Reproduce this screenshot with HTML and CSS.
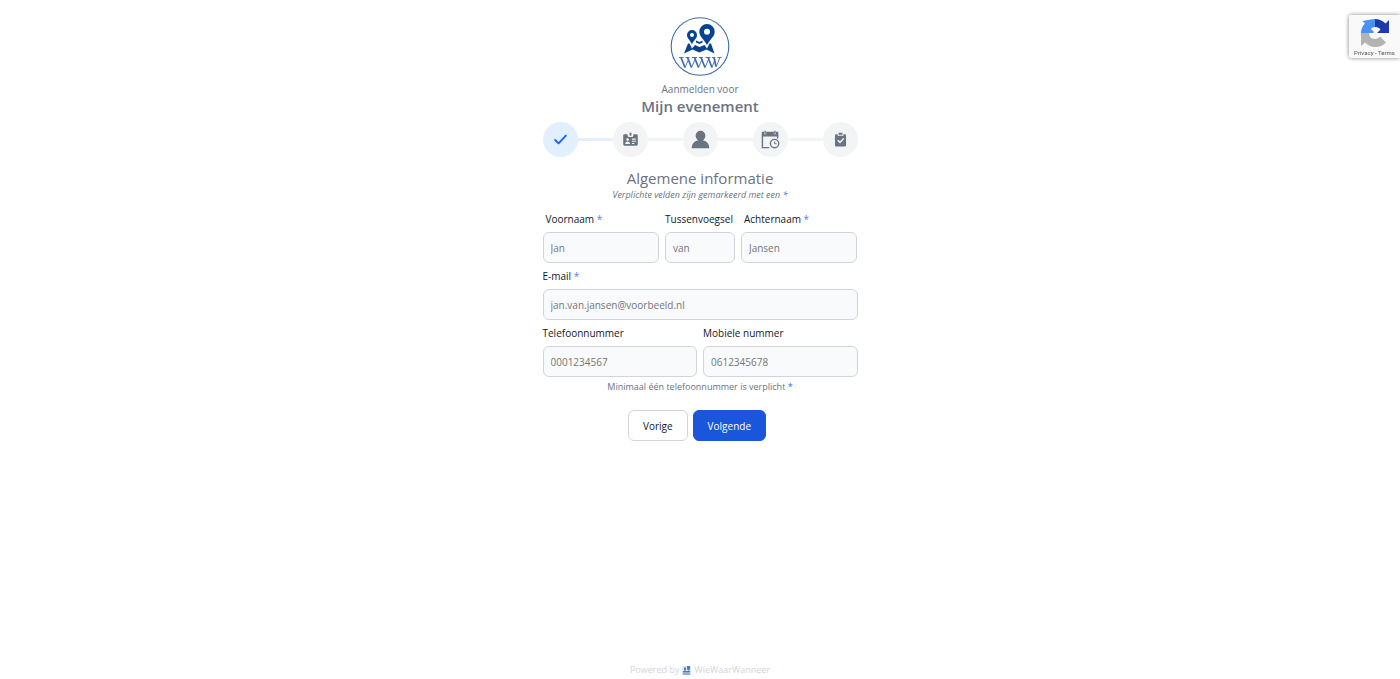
FILE: index.html
```
<!DOCTYPE html>
<html lang="nl">
<head>
    <meta charset="UTF-8">
    <meta name="viewport" content="width=device-width, initial-scale=1.0">
    <title>Aanmelden - WieWaarWanneer</title>
    <link rel="stylesheet" href="styles.css">
</head>
<body>

<main class="container">
    <!-- Logo -->
    <svg class="logo" viewBox="0 0 60 60" role="img" aria-label="WieWaarWanneer">
        <circle cx="30" cy="29.500" r="28.800" fill="#fff" stroke="#3c6cab" stroke-width="1.100"/>
        <g fill="#07448f" fill-rule="evenodd">
            <path d="M37 7a7.700 7.700 0 0 1 7.700 7.700c0 5-5.200 8-7.700 13.300c-2.500-5.300-7.700-8.300-7.700-13.300A7.700 7.700 0 0 1 37 7zm0 4.700a3 3 0 1 0 0 6a3 3 0 0 0 0-6z"/>
            <path d="M22 13a5 5 0 0 1 5 5c0 3.500-3.500 5.500-5 9.500c-1.500-4-5-6-5-9.500a5 5 0 0 1 5-5zm0 3a2 2 0 1 0 0 4a2 2 0 0 0 0-4z"/>
            <path d="M26 23.500l3.500 1.500 3-1.500v2l-3 1.500-3.500-1.500z"/>
            <path d="M18 26.500h1.500l2.500 5 3-3.500 4.500 2 5-2 2.500 3.500 2.500-5H41L44.500 36.500l-8-4-7 3-7-3-8.500 4z"/>
        </g>
        <!-- Three overlapping W shapes -->
        <g fill="none" stroke="#3c6cab">
            <path d="M9 40.500h4.500M15.500 40.500h4M22 40.500h5M29 40.500h4M35.500 40.500h5M42 40.500h3.500M47.500 40.500h4" stroke-width=".9"/>
            <path d="M11 40.500l4 10M17.500 40.500l4 10M24.500 40.500l4 10M31 40.500l4 10M38 40.500l4 10M44 40.500l2 9" stroke-width="1.700"/>
            <path d="M15 50.500l3.500-8M21.500 50.500l4-9M28.500 50.500l3.500-8M35 50.500l4-9M42 50.500l3-8M46 50l4-9.500" stroke-width=".9"/>
        </g>
    </svg>
    <p class="intro">Aanmelden voor</p>
    <h1>Mijn evenement</h1>

    <!-- Steps -->
    <ol class="steps">
        <li class="step done">
            <span class="step-icon">
                <svg viewBox="0 0 36 36"><path d="M12.500 18.500l3.500 3.500 7.500-8" fill="none" stroke="#1c64f2" stroke-width="2" stroke-linecap="round" stroke-linejoin="round"/></svg>
            </span>
        </li>
        <li class="step">
            <span class="step-icon">
                <svg viewBox="0 0 36 36">
                    <path d="M12 12.500h3v1a2 2 0 0 0 2 2h2a2 2 0 0 0 2-2v-1h3a1.500 1.500 0 0 1 1.500 1.500v9a1.500 1.500 0 0 1-1.500 1.500H12a1.500 1.500 0 0 1-1.500-1.500v-9a1.500 1.500 0 0 1 1.500-1.500z"/>
                    <path d="M17 11h2v3h-2z"/>
                    <g fill="#f3f4f6"><circle cx="15" cy="18" r="1.400"/><path d="M12.500 22.700c0-3.500 5-3.500 5 0zM19.500 17H23.500v1.200h-4zM19.500 19.300h4v1h-4zM19.500 21.500h2.500v1h-2.500z"/></g>
                </svg>
            </span>
        </li>
        <li class="step">
            <span class="step-icon">
                <svg viewBox="0 0 36 36"><path d="M18 9a5 5 0 0 1 5 5c0 2-1 4-2.500 5c4 .6 6.500 3.500 6.500 8H9c0-4.500 2.500-7.400 6.500-8C14 18 13 16 13 14a5 5 0 0 1 5-5z"/></svg>
            </span>
        </li>
        <li class="step">
            <span class="step-icon">
                <svg viewBox="0 0 36 36">
                    <path d="M9 10h2.500v2.500h2V10h8v2.500h2V10H26v5H9z"/>
                    <path d="M12.500 9v3M22.500 9v3M9.700 14v12.300h7M25.300 14v3" fill="none" stroke="#6b7280" stroke-width="1.400"/>
                    <circle cx="22.200" cy="22.200" r="4.300" fill="#f3f4f6" stroke="#6b7280" stroke-width="1.400"/>
                    <path d="M22.200 20v2.300h2" fill="none" stroke="#6b7280"/>
                </svg>
            </span>
        </li>
        <li class="step">
            <span class="step-icon">
                <svg viewBox="0 0 36 36">
                    <path d="M13.500 12.500H15v1.700h6v-1.700h1.500a1.200 1.200 0 0 1 1.200 1.200v10.300a1.200 1.200 0 0 1-1.200 1.200h-9a1.200 1.200 0 0 1-1.200-1.200V13.700a1.200 1.200 0 0 1 1.200-1.200zM16 11h4v2.200h-4z"/>
                    <path d="M15.500 19l2 2 3.500-3.700" fill="none" stroke="#f3f4f6" stroke-width="1.400" stroke-linecap="round"/>
                </svg>
            </span>
        </li>
    </ol>

    <h2>Algemene informatie</h2>
    <p class="note italic">Verplichte velden zijn gemarkeerd met een <span class="required">*</span></p>

    <form>
        <div class="row name-row">
            <div class="field indent">
                <label for="voornaam">Voornaam <span class="star">*</span></label>
                <input type="text" id="voornaam" placeholder="Jan">
            </div>
            <div class="field">
                <label for="tussenvoegsel">Tussenvoegsel</label>
                <input type="text" id="tussenvoegsel" placeholder="van">
            </div>
            <div class="field indent">
                <label for="achternaam">Achternaam <span class="star">*</span></label>
                <input type="text" id="achternaam" placeholder="Jansen">
            </div>
        </div>
        <div class="row">
            <div class="field">
                <label for="email">E-mail <span class="star">*</span></label>
                <input type="email" id="email" placeholder="jan.van.jansen@voorbeeld.nl">
            </div>
        </div>
        <div class="row phone-row">
            <div class="field">
                <label for="telefoon">Telefoonnummer</label>
                <input type="tel" id="telefoon" placeholder="0001234567">
            </div>
            <div class="field">
                <label for="mobiel">Mobiele nummer</label>
                <input type="tel" id="mobiel" placeholder="0612345678">
            </div>
        </div>
        <p class="note">Minimaal één telefoonnummer is verplicht <span class="required">*</span></p>

        <div class="buttons">
            <button type="button" class="btn">Vorige</button>
            <button type="submit" class="btn btn-primary">Volgende</button>
        </div>
    </form>
</main>

<footer>
    <span>Powered by</span>
    <svg class="footer-logo" viewBox="0 0 9 9">
        <path d="M0 0h9v9H0z" fill="#dbe6f3"/>
        <path d="M5 0h3v3L6.500 5 5 3zM2 1.500h2V4L3 5 2 4zM1 5h7v1.500H1zM1 7.500h7v1H1z" fill="#4f7db8"/>
    </svg>
    <span>WieWaarWanneer</span>
</footer>

<!-- reCAPTCHA badge -->
<aside class="captcha">
    <svg viewBox="0 0 28 28">
        <path d="M0 14C0 10 1.500 7 4 4.500L1.500 2 10 .5 14 0v8c-2 0-3.500 1-4 2l3 3-1 1z" fill="#4a90f5"/>
        <path d="M14 0c4 0 7.500 1.500 10.500 4.500L28 1v13H16l3.500-3.500C18 8.500 16 8 14 8z" fill="#1c3aa9"/>
        <path d="M0 14h8c0 3 2 6 6 6 2 0 4-1 5-2.500L16 14.500l9 9C19 30 9 29 4 23.500L0 27z" fill="#b3b3b3"/>
    </svg>
    <div class="captcha-links"><a href="#">Privacy</a> - <a href="#">Terms</a></div>
</aside>

</body>
</html>
```

FILE: styles.css
```
* {
    box-sizing: border-box;
}

body {
    font-family: "Open Sans", sans-serif;
    font-size: 10px;
    line-height: 18px;
    margin: 0;
    min-height: 100vh;
    display: flex;
    flex-direction: column;
    align-items: center;
    background-color: white;
    color: #6b7280;
}

h1, h2, p {
    margin: 0;
    text-align: center;
}

.container {
    width: 100%;
    max-width: 315px;
    padding-top: 17px;
    flex: 1;
}

.logo {
    display: block;
    width: 60px;
    height: 60px;
    margin: 0 auto 3px;
}

h1 {
    font-size: 15px;
    font-weight: 600;
    line-height: 16px;
}

h2 {
    font-size: 15px;
    font-weight: 400;
    line-height: 18px;
}

/* Steps */
.steps {
    display: flex;
    justify-content: space-between;
    list-style: none;
    margin: 8px 0 12px;
    padding: 0;
}

.step {
    display: flex;
    align-items: center;
}

.step:not(:last-child) {
    flex: 1;
}

.step:not(:last-child)::after {
    content: "";
    flex: 1;
    height: 3px;
    background-color: #f3f4f6;
}

.step-icon {
    width: 35px;
    height: 35px;
    border-radius: 50%;
    background-color: #f3f4f6;
}

.step-icon svg {
    display: block;
    width: 100%;
    fill: #6b7280;
}

.step.done .step-icon,
.step.done:not(:last-child)::after {
    background-color: #e1effe;
}

.note {
    font-size: 9px;
    line-height: 12px;
}

.italic {
    font-style: italic;
    margin: 2px 0 9px;
}

.required {
    color: #1c64f2;
}

.star {
    color: #6875f5;
}

/* Form */
.row {
    display: grid;
    gap: 6px;
    margin-bottom: 4px;
}

.name-row {
    grid-template-columns: 5fr 3fr 5fr;
}

.phone-row {
    grid-template-columns: 1fr 1fr;
}

.field {
    min-width: 0;
}

label {
    display: block;
    margin-bottom: 4px;
    color: #111827;
    white-space: nowrap;
}

.indent label {
    padding-left: 3px;
}

input {
    display: block;
    width: 100%;
    height: 31px;
    padding: 0 7px;
    font: inherit;
    border: 1px solid #d1d5db;
    border-radius: 6px;
    background-color: #f9fafb;
}

input::placeholder {
    color: #757575;
}

.buttons {
    display: flex;
    justify-content: center;
    gap: 5px;
    margin-top: 17px;
    padding-right: 6px;
}

.btn {
    height: 31px;
    padding: 0 14px;
    font: inherit;
    color: #111827;
    background-color: white;
    border: 1px solid #d1d5db;
    border-radius: 6px;
    cursor: pointer;
}

.btn-primary {
    color: white;
    font-weight: 500;
    background-color: #1a56db;
    border-color: #1a56db;
}

footer {
    display: flex;
    align-items: center;
    gap: 3px;
    font-size: 9px;
    color: #d1d5db;
}

.footer-logo {
    width: 9px;
    height: 9px;
}

/* reCAPTCHA badge */
.captcha {
    position: fixed;
    top: 15px;
    right: 0;
    width: 51px;
    height: 43px;
    padding-top: 4px;
    background-color: #f9f9f9;
    border-radius: 2px 0 0 2px;
    box-shadow: 0 0 4px #808080;
    text-align: center;
}

.captcha svg {
    display: block;
    width: 28px;
    height: 28px;
    margin: 0 auto;
}

.captcha-links {
    font-family: Roboto, sans-serif;
    font-size: 6px;
    line-height: 12px;
    color: #555;
    white-space: nowrap;
}

.captcha a {
    color: inherit;
    text-decoration: none;
}
```
